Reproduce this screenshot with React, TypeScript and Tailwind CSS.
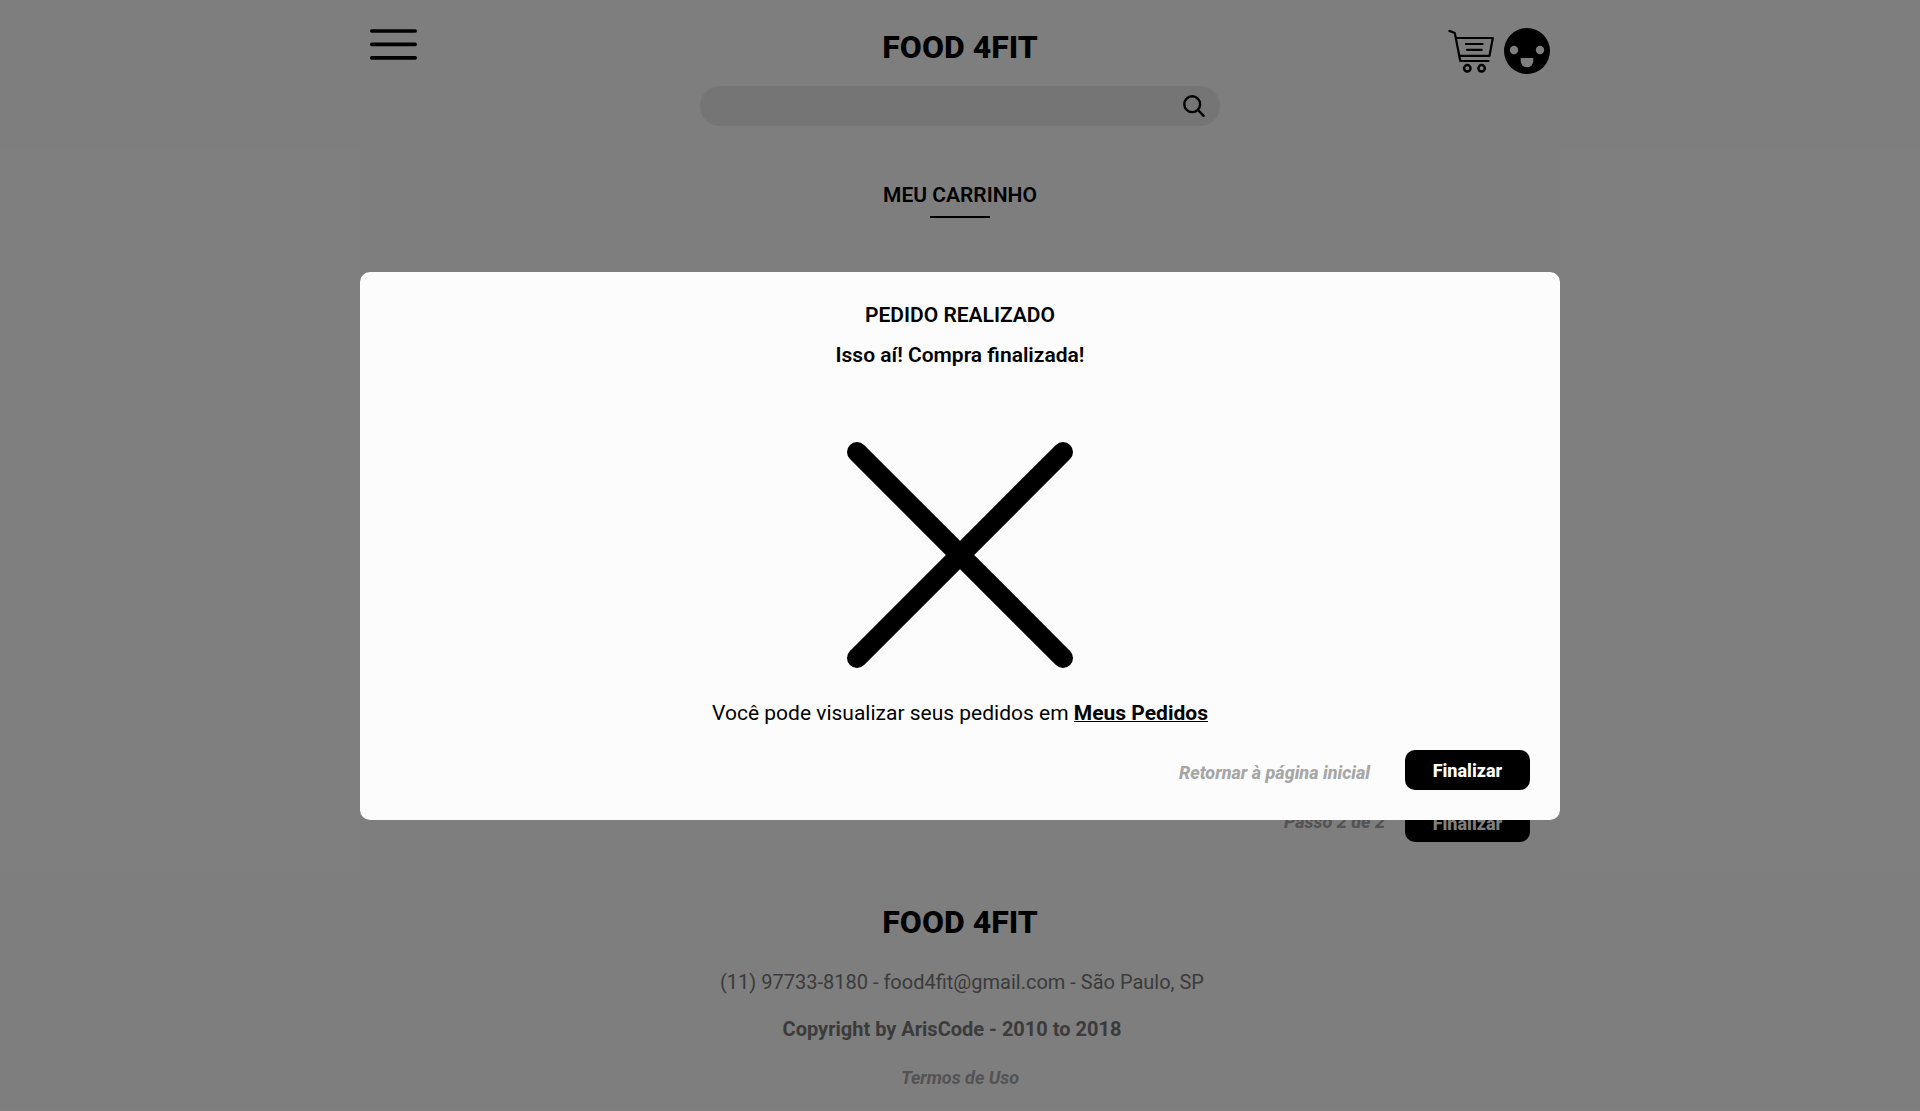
import React from "react";

function MenuIcon() {
  return (
    <svg width="47" height="32" viewBox="0 0 47 32" fill="none" stroke="#000" strokeWidth="3.6" strokeLinecap="round" aria-hidden="true">
      <path d="M1.8 3H45.2M1.8 16.4H45.2M1.8 29.9H45.2" />
    </svg>
  );
}

function CartIcon() {
  return (
    <svg width="46" height="46" viewBox="0 0 46 46" fill="none" stroke="#000" strokeWidth="2.2" strokeLinecap="round" strokeLinejoin="round" aria-hidden="true">
      <path d="M1.4 2.9L6.8 5L12.3 33H40.6" />
      <path d="M8.2 10H44.8L41.5 27.8H11.5" />
      <path d="M18 16H34.6M19 21.8H33.8" />
      <circle cx="19.3" cy="40.3" r="3.2" strokeWidth="2.5" />
      <circle cx="33.6" cy="40.3" r="3.2" strokeWidth="2.5" />
    </svg>
  );
}

function FaceIcon() {
  return (
    <svg width="46" height="46" viewBox="0 0 46 46" aria-hidden="true">
      <circle cx="23" cy="23" r="23" fill="#000" />
      <circle cx="10" cy="22" r="4.2" fill="#fcfcfc" />
      <circle cx="36" cy="22" r="4.2" fill="#fcfcfc" />
      <path d="M16.7 30H29.3V33A6.3 6.3 0 0 1 16.7 33Z" fill="#fcfcfc" />
    </svg>
  );
}

function SearchIcon() {
  return (
    <svg width="22" height="22" viewBox="0 0 22 22" fill="none" stroke="#000" strokeWidth="2.4" strokeLinecap="round" aria-hidden="true">
      <circle cx="9.2" cy="9.2" r="7.9" />
      <path d="M15 15L20.6 20.8" />
    </svg>
  );
}

function Header() {
  return (
    <header className="bg-[#fcfcfc] pt-7 pb-6">
      <div className="mx-auto grid max-w-[1200px] grid-cols-[1fr_auto_1fr] items-start px-2.5">
        <button type="button" aria-label="Menu" className="justify-self-start">
          <MenuIcon />
        </button>
        <h1 className="text-[32px] leading-[38px] font-extrabold">FOOD 4FIT</h1>
        <div className="flex gap-2.5 justify-self-end">
          <a href="#carrinho" aria-label="Carrinho">
            <CartIcon />
          </a>
          <a href="#perfil" aria-label="Perfil">
            <FaceIcon />
          </a>
        </div>
      </div>
      <form className="mx-auto mt-3 flex h-10 w-full max-w-[520px] items-center rounded-full bg-[#eaeaea] pr-[15px] pl-5">
        <input type="search" aria-label="Buscar" className="min-w-0 flex-1 bg-transparent outline-none" />
        <button type="button" aria-label="Pesquisar">
          <SearchIcon />
        </button>
      </form>
    </header>
  );
}

function Cart() {
  return (
    <main className="mx-auto flex min-h-[721px] w-full max-w-[1200px] flex-col bg-[#fcfcfc] px-[30px] pt-7 pb-[29px]">
      <h2 className="text-center text-[21px] leading-[34px] font-semibold">MEU CARRINHO</h2>
      <hr className="mx-auto mt-1 w-[60px] border-t-2 border-black" />
      <div className="mt-auto flex justify-end gap-5 text-lg leading-10 font-extrabold">
        <span className="text-[#a6a6a6] italic">Passo 2 de 2</span>
        <button type="button" className="h-10 w-[125px] rounded-[10px] bg-black pt-0.5 text-white">
          Finalizar
        </button>
      </div>
    </main>
  );
}

function Footer() {
  return (
    <footer className="bg-[#fcfcfc] px-4 pt-8 pb-4 text-center text-xl leading-8">
      <p className="text-[32px] leading-[38px] font-extrabold">FOOD 4FIT</p>
      <p className="mt-[25px] pl-1 text-[#777]">(11) 97733-8180 - food4fit@gmail.com - São Paulo, SP</p>
      <p className="mt-[15px] pr-4 font-bold text-[#777]">Copyright by ArisCode - 2010 to 2018</p>
      <a href="#termos" className="mt-[17px] inline-block text-lg leading-8 font-bold text-[#a6a6a6] italic">
        Termos de Uso
      </a>
    </footer>
  );
}

function OrderDialog() {
  return (
    <div className="fixed inset-0 flex items-center justify-center bg-black/50 pb-[19px]">
      <section
        role="dialog"
        aria-modal="true"
        aria-labelledby="order-title"
        className="flex w-full max-w-[1200px] flex-col items-center rounded-[10px] bg-[#fcfcfc] px-[30px] pt-[23px] pb-[30px] text-[21px] leading-10"
      >
        <h2 id="order-title" className="font-semibold">PEDIDO REALIZADO</h2>
        <p className="font-semibold">Isso aí! Compra finalizada!</p>
        <svg className="mt-[67px]" width="226" height="226" viewBox="0 0 226 226" stroke="#000" strokeWidth="20" strokeLinecap="round" aria-hidden="true">
          <path d="M10 10L216 216M216 10L10 216" />
        </svg>
        <p className="mt-[25px]">
          Você pode visualizar seus pedidos em{" "}
          <a href="#pedidos" className="font-bold underline decoration-1">Meus Pedidos</a>
        </p>
        <div className="mt-[17px] flex items-end gap-[35px] self-end text-lg font-extrabold">
          <a href="#inicio" className="leading-[34px] text-[#a6a6a6] italic">Retornar à página inicial</a>
          <button type="button" className="h-10 w-[125px] rounded-[10px] bg-black pt-0.5 text-white">
            Finalizar
          </button>
        </div>
      </section>
    </div>
  );
}

export default function App() {
  return (
    <div className="min-h-screen bg-white font-[Roboto,sans-serif] text-black">
      <Header />
      <Cart />
      <Footer />
      <OrderDialog />
    </div>
  );
}
